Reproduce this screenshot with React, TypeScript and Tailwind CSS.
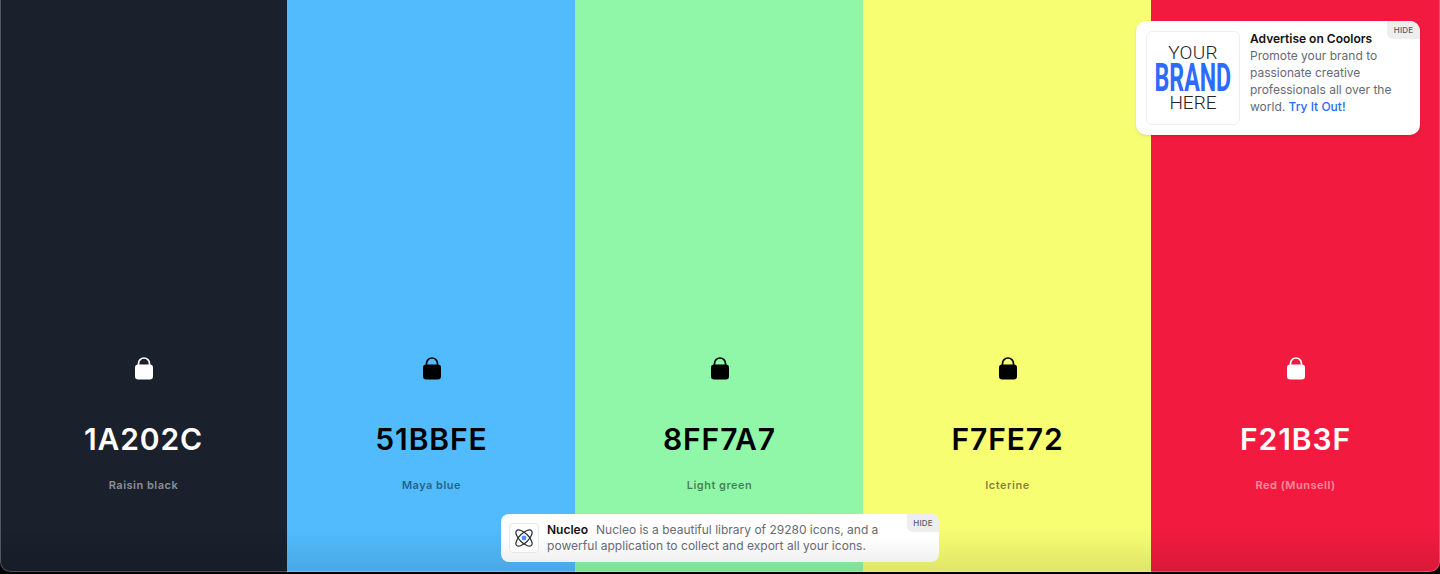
import React from 'react';

interface SwatchProps {
  hex: string;
  name: string;
  bg: string;
  text: string;
  label: string;
  width: string;
}

const swatches: SwatchProps[] = [
  { hex: '1A202C', name: 'Raisin black', bg: 'bg-[#1a202c]', text: 'text-white', label: 'text-white/50', width: 'w-[287px]' },
  { hex: '51BBFE', name: 'Maya blue', bg: 'bg-[#51bbfe]', text: 'text-black', label: 'text-black/50', width: 'w-[288px] pl-[1px]' },
  { hex: '8FF7A7', name: 'Light green', bg: 'bg-[#8ff7a7]', text: 'text-black', label: 'text-black/50', width: 'w-[288px] pl-[1px]' },
  { hex: 'F7FE72', name: 'Icterine', bg: 'bg-[#f7fe72]', text: 'text-black', label: 'text-black/50', width: 'w-[288px] pl-[1px]' },
  { hex: 'F21B3F', name: 'Red (Munsell)', bg: 'bg-[#f21b3f]', text: 'text-white', label: 'text-white/50', width: 'w-[289px]' },
];

const LockIcon = () => (
  <svg width="20" height="24" viewBox="0 0 20 24" fill="currentColor">
    <path d="M4.5 11V7.5a5.5 5.5 0 0 1 11 0V11" fill="none" stroke="currentColor" strokeWidth="1.7" />
    <rect x="1" y="8.5" width="18" height="15" rx="3.2" />
  </svg>
);

const NucleoIcon = () => (
  <svg width="22" height="22" viewBox="0 0 22 22" fill="none" stroke="#2a2f3a" strokeWidth="1.2">
    <ellipse cx="11" cy="11" rx="10.5" ry="4.6" transform="rotate(45 11 11)" />
    <ellipse cx="11" cy="11" rx="10.5" ry="4.6" transform="rotate(-45 11 11)" />
    <circle cx="11" cy="11" r="2.4" fill="#4d8dff" stroke="none" />
  </svg>
);

const HideTag = ({ className }: { className: string }) => (
  <div className={`absolute top-0 right-0 bg-[#eeeeee] text-[#555a66] text-[8px] font-medium tracking-[0.2px] flex items-center justify-center ${className}`}>
    HIDE
  </div>
);

const Swatch = ({ hex, name, bg, text, label, width }: SwatchProps) => (
  <div className={`flex flex-col items-center ${width} ${bg} ${text}`}>
    <div className="mt-[356px] h-[24px]">
      <LockIcon />
    </div>
    <div className="mt-[41px] text-[30px] leading-[36px] font-semibold tracking-[0.9px]">{hex}</div>
    <div className="mt-[21px] text-[11px] leading-[14px] font-semibold tracking-[0.5px]">
      <span className={label}>{name}</span>
    </div>
  </div>
);

export default function App() {
  return (
    <div className="w-[1440px] h-[574px] bg-black relative overflow-hidden font-['Inter',sans-serif]">
      <div className="relative h-[572px] flex overflow-hidden rounded-b-[10px]">
        {swatches.map((s) => (
          <Swatch key={s.hex} {...s} />
        ))}
        <div className="absolute left-0 right-0 bottom-0 h-[44px] bg-gradient-to-b from-transparent to-black/10" />
        <div className="absolute inset-0 rounded-b-[10px] border-x border-b border-white/25 border-t-0" />
      </div>

      <div className="absolute left-[1136px] top-[21px] w-[284px] h-[114px] bg-white rounded-[10px] overflow-hidden flex pl-[10px] pt-[10px] shadow-sm">
        <div className="w-[94px] h-[94px] rounded-[6px] border border-[#eeeeee] flex flex-col items-center justify-center shrink-0">
          <div className="text-[19px] leading-[20px] text-[#222222] font-['Roboto',sans-serif] font-light tracking-[0.3px]">YOUR</div>
          <div className="text-[38px] leading-[30px] text-[#2b6bff] font-['Roboto',sans-serif] font-bold scale-x-[0.61]">BRAND</div>
          <div className="text-[19px] leading-[20px] text-[#222222] font-['Roboto',sans-serif] font-light">HERE</div>
        </div>
        <div className="ml-[10px] -mt-[1px] text-[12px] leading-[17px] text-[#666a73]">
          <div className="font-semibold text-[#111111]">Advertise on Coolors</div>
          <div>Promote your brand to</div>
          <div>passionate creative</div>
          <div>professionals all over the</div>
          <div>
            world. <span className="text-[#1f6bff] font-medium">Try It Out!</span>
          </div>
        </div>
        <HideTag className="w-[33px] h-[18px] rounded-bl-[6px]" />
      </div>

      <div className="absolute left-[501px] top-[514px] w-[438px] h-[48px] bg-gradient-to-b from-white via-white to-[#f0f0f0] rounded-[8px] overflow-hidden flex items-center pl-[8px]">
        <div className="w-[30px] h-[30px] rounded-[4px] border border-[#e8e8e8] bg-white flex items-center justify-center shrink-0">
          <NucleoIcon />
        </div>
        <div className="ml-[8px] text-[12px] leading-[16px] text-[#666a73]">
          <div>
            <span className="font-semibold text-[#111111]">Nucleo</span>
            <span className="ml-[8px]">Nucleo is a beautiful library of 29280 icons, and a</span>
          </div>
          <div className="tracking-[0.03px]">powerful application to collect and export all your icons.</div>
        </div>
        <HideTag className="w-[32px] h-[18px] rounded-bl-[6px]" />
      </div>
    </div>
  );
}
